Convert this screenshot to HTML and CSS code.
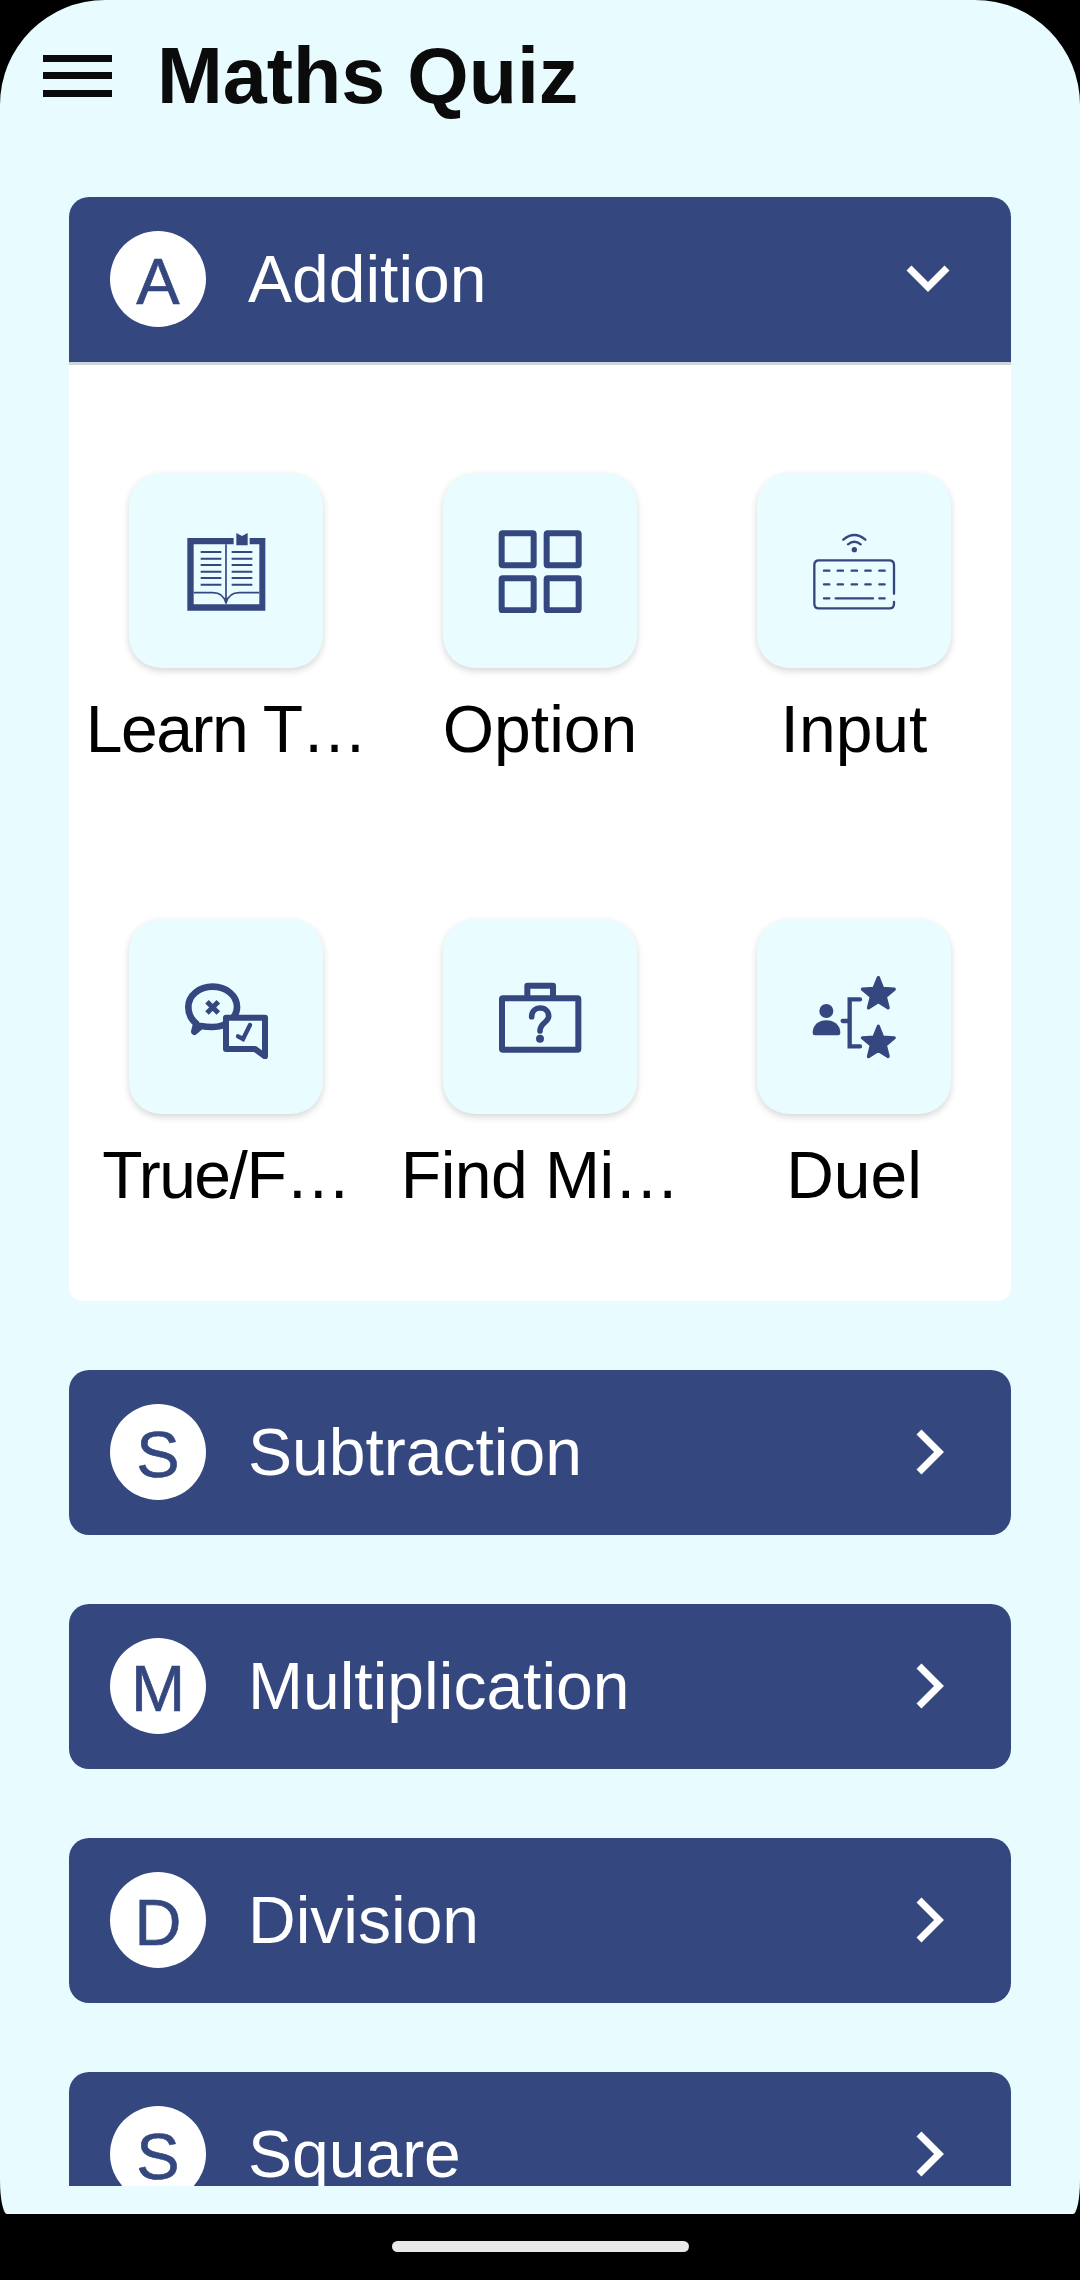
FILE: index.html
```html
<!DOCTYPE html>
<html lang="en">
<head>
<meta charset="utf-8">
<title>Maths Quiz</title>
<link rel="stylesheet" href="styles.css">
</head>
<body>
<div class="screen">
  <div class="app">
    <header class="topbar">
      <div class="burger"><span></span><span></span><span></span></div>
      <h1 class="title">Maths Quiz</h1>
    </header>
    <main class="list">
      <section class="section">
        <div class="row row-open">
          <span class="badge">A</span>
          <span class="row-label">Addition</span>
          <svg class="chev" viewBox="0 0 60 60"><path d="M10 19 L29 38 L48 19"/></svg>
        </div>
        <div class="panel">
          <div class="cell">
            <div class="tile">
              <svg class="icon" viewBox="219 206 252 252">
                <path class="fill" fill-rule="evenodd" d="M229 233H368V252H248V432H445V252H416V233H463V451H229Z"/>
                <path class="fill" d="M376 218L393 227L410 218V255H376Z"/>
                <path class="line-5" d="M345 252V430M248 397H305C328 397 340 408 345 428C350 408 362 397 385 397H445"/>
                <path class="line-6" d="M269 275H331M269 295H331M269 314H331M269 334H331M269 353H331M269 373H331M362 275H424M362 295H424M362 314H424M362 334H424M362 353H424M362 373H424"/>
              </svg>
            </div>
            <div class="cell-label tight">Learn T…</div>
          </div>
          <div class="cell">
            <div class="tile">
              <svg class="icon" viewBox="202 206 252 252">
                <rect class="box" x="213" y="219" width="96" height="96" rx="3"/>
                <rect class="box" x="348" y="219" width="96" height="96" rx="3"/>
                <rect class="box" x="213" y="354" width="96" height="96" rx="3"/>
                <rect class="box" x="348" y="354" width="96" height="96" rx="3"/>
              </svg>
            </div>
            <div class="cell-label">Option</div>
          </div>
          <div class="cell">
            <div class="tile">
              <svg class="icon" viewBox="184 206 252 252">
                <path class="line-7" d="M430 400V314Q430 300 416 300H205Q191 300 191 314V430Q191 444 205 444H416Q430 444 430 430V425"/>
                <path class="line-7" d="M278 238Q311 210 344 238M292 252Q311 236 330 252"/>
                <circle class="fill" cx="311" cy="268" r="8"/>
                <path class="line-7" d="M220 331H236M261 331H277M303 331H319M344 331H360M386 331H402M220 372H236M261 372H277M303 372H319M344 372H360M386 372H402M220 414H236M255 414H367M386 414H402"/>
              </svg>
            </div>
            <div class="cell-label">Input</div>
          </div>
          <div class="cell">
            <div class="tile">
              <svg class="icon" viewBox="219 194 252 252">
                <path class="line-20" d="M250 364L256 340C238 325 232 308 232 290C232 255 265 229 305 229C345 229 378 255 378 290C378 322 345 350 305 350C292 350 280 349 270 347Z"/>
                <path class="line-15" d="M288 274L322 308M322 274L288 308"/>
                <path class="bubble" d="M345 322H462V438L432 416H345Z"/>
                <path class="line-13" d="M381 378L396 386L417 344"/>
              </svg>
            </div>
            <div class="cell-label tight">True/F…</div>
          </div>
          <div class="cell">
            <div class="tile">
              <svg class="icon" viewBox="202 194 252 252">
                <rect class="box" x="214" y="264" width="229" height="154" rx="3"/>
                <path class="line-18" d="M290 264V226H367V264"/>
                <path class="line-17" d="M303 319C303 303 315 293 329 293C344 293 354 304 354 318C354 337 328 336 328 362"/>
                <circle class="fill" cx="328" cy="385" r="12"/>
              </svg>
            </div>
            <div class="cell-label tight-s">Find Mi…</div>
          </div>
          <div class="cell">
            <div class="tile">
              <svg class="icon" viewBox="184 194 252 252">
                <circle class="fill" cx="227" cy="302" r="21"/>
                <path class="fill" d="M186 368C186 344 204 330 227 330C250 330 269 344 269 368Q269 375 262 375H193Q186 375 186 368Z"/>
                <path class="line-13" d="M328 267H297V408H328M276 332H297"/>
                <polygon class="star" transform="translate(383 252)" points="0,-50 12.9,-17.8 47.6,-15.5 20.9,6.8 29.4,40.5 0,22 -29.4,40.5 -20.9,6.8 -47.6,-15.5 -12.9,-17.8"/>
                <polygon class="star" transform="translate(383 398)" points="0,-50 12.9,-17.8 47.6,-15.5 20.9,6.8 29.4,40.5 0,22 -29.4,40.5 -20.9,6.8 -47.6,-15.5 -12.9,-17.8"/>
              </svg>
            </div>
            <div class="cell-label">Duel</div>
          </div>
        </div>
      </section>
      <section class="section">
        <div class="row">
          <span class="badge">S</span>
          <span class="row-label">Subtraction</span>
          <svg class="chev" viewBox="0 0 60 60"><path d="M20 10 L40 30 L20 50"/></svg>
        </div>
      </section>
      <section class="section">
        <div class="row">
          <span class="badge">M</span>
          <span class="row-label">Multiplication</span>
          <svg class="chev" viewBox="0 0 60 60"><path d="M20 10 L40 30 L20 50"/></svg>
        </div>
      </section>
      <section class="section">
        <div class="row">
          <span class="badge">D</span>
          <span class="row-label">Division</span>
          <svg class="chev" viewBox="0 0 60 60"><path d="M20 10 L40 30 L20 50"/></svg>
        </div>
      </section>
      <section class="section">
        <div class="row">
          <span class="badge">S</span>
          <span class="row-label">Square</span>
          <svg class="chev" viewBox="0 0 60 60"><path d="M20 10 L40 30 L20 50"/></svg>
        </div>
      </section>
    </main>
  </div>
  <nav class="navbar"><span class="pill"></span></nav>
</div>
</body>
</html>
```
FILE: styles.css
```css
* { box-sizing: border-box; }
html, body { margin: 0; padding: 0; background: #000; }
body { width: 1080px; height: 2280px; overflow: hidden; font-family: "Liberation Sans", Arial, sans-serif; }
.screen { width: 1080px; height: 2280px; background: #000; overflow: hidden; display: flex; flex-direction: column; }
.app { flex: 1; min-height: 0; display: flex; flex-direction: column; background: #e8fcff; border-radius: 105px 105px 7px 7px / 105px 105px 34px 34px; }
.navbar { height: 66px; flex: none; display: flex; justify-content: center; padding-top: 27px; }
.pill { width: 297px; height: 11px; border-radius: 6px; background: #e8e8e8; }
.topbar { flex: none; display: flex; align-items: center; gap: 45px; padding: 32px 0 0 43px; }
.burger { width: 69px; height: 42px; display: flex; flex-direction: column; justify-content: space-between; }
.burger span { height: 7px; background: #0b0b0b; }
.title { margin: 0; font-size: 79px; font-weight: 700; color: #0b0b0b; line-height: 87px; }
.list { flex: 1; min-height: 0; overflow: hidden; margin: 78px 0 28px; padding: 0 69px; display: flex; flex-direction: column; gap: 69px; }
.section { flex: none; }
.row { height: 165px; background: #34477f; border-radius: 20px; display: flex; align-items: center; padding: 0 52px 1px 41px; color: #fff; }
.row-open { height: 168px; border-radius: 20px 20px 0 0; border-bottom: 3px solid #cfd6d8; }
.badge { width: 96px; height: 96px; flex: none; border-radius: 50%; background: #fff; color: #34477f; font-size: 65px; line-height: 72px; padding-top: 15px; text-align: center; -webkit-text-stroke: 0.6px #34477f; }
.row-label { flex: 1; margin-left: 42px; font-size: 66px; line-height: 76px; }
.chev { width: 60px; height: 60px; flex: none; }
.chev path { fill: none; stroke: #fff; stroke-width: 7; }
.panel { background: #fff; border-radius: 0 0 14px 14px; display: grid; grid-template-columns: repeat(3, 314px); row-gap: 152px; padding: 108px 0 88px; }
.cell { display: flex; flex-direction: column; align-items: center; min-width: 0; }
.tile { width: 194px; height: 195px; border-radius: 32px; background: #e9fcff; box-shadow: 0 3px 7px rgba(0, 0, 0, .16); display: flex; align-items: center; justify-content: center; }
.icon { width: 84px; height: 84px; }
.cell-label { margin-top: 23px; font-size: 66px; line-height: 76px; color: #000; text-align: center; white-space: nowrap; }
.tight { letter-spacing: -1.5px; }
.tight-s { letter-spacing: -0.5px; }
.fill { fill: #34477f; }
.star { fill: #34477f; stroke: #34477f; stroke-width: 10; stroke-linejoin: round; }
.box { fill: none; stroke: #34477f; stroke-width: 18; }
.bubble { fill: #e9fcff; stroke: #34477f; stroke-width: 18; stroke-linejoin: round; }
.line-5, .line-6, .line-7, .line-13, .line-15, .line-17, .line-18, .line-20 { fill: none; stroke: #34477f; }
.line-5 { stroke-width: 5; }
.line-6 { stroke-width: 6; }
.line-7 { stroke-width: 7; stroke-linecap: round; }
.line-13 { stroke-width: 13; stroke-linecap: round; }
.line-15 { stroke-width: 15; }
.line-17 { stroke-width: 17; stroke-linecap: round; }
.line-18 { stroke-width: 18; stroke-linejoin: round; }
.line-20 { stroke-width: 20; stroke-linejoin: round; }
```
